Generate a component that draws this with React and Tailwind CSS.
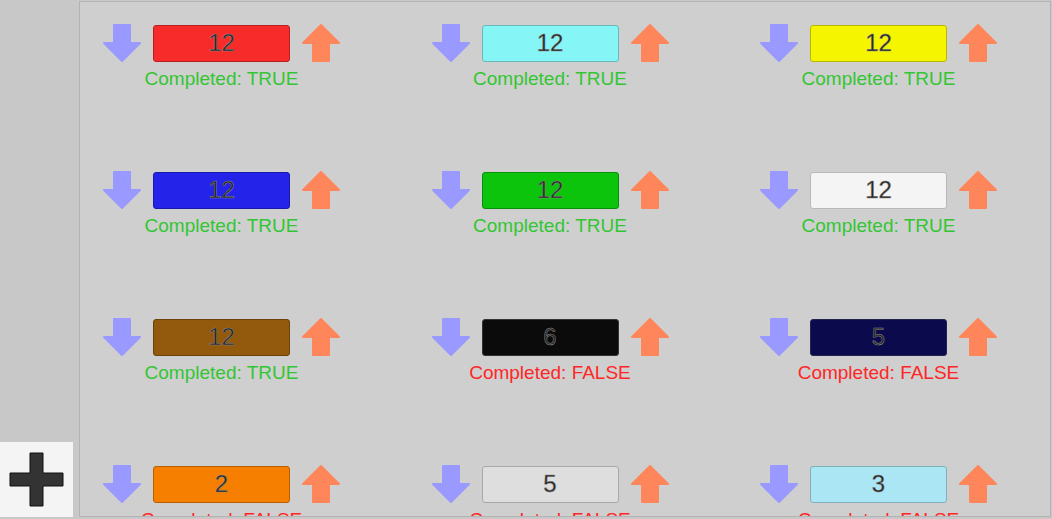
import React from "react";

const items = [
  { color: "#f82b2b", border: "#b82020", value: 12, done: true },
  { color: "#86f5f5", border: "#6ab8b8", value: 12, done: true },
  { color: "#f5f500", border: "#b8b800", value: 12, done: true },
  { color: "#2323ea", border: "#1a1aa8", value: 12, done: true },
  { color: "#0bc40b", border: "#0a8f0a", value: 12, done: true },
  { color: "#f4f4f4", border: "#b8b8b8", value: 12, done: true },
  { color: "#93590c", border: "#6b420a", value: 12, done: true },
  { color: "#0b0b0c", border: "#333", value: 6, done: false },
  { color: "#0a0a4c", border: "#23234f", value: 5, done: false },
  { color: "#f67f00", border: "#b86000", value: 2, done: false },
  { color: "#dedede", border: "#a8a8a8", value: 5, done: false },
  { color: "#aae6f4", border: "#7fb0bc", value: 3, done: false },
];

function DownArrow() {
  return (
    <svg width="40" height="40" viewBox="0 0 40 40" className="shrink-0">
      <path
        d="M12 2 H28 V20 H38 L20 38 L2 20 H12 Z"
        fill="#9999ff"
        stroke="#9999ff"
        strokeWidth="2"
        strokeLinejoin="round"
      />
    </svg>
  );
}

function UpArrow() {
  return (
    <svg width="40" height="40" viewBox="0 0 40 40" className="shrink-0">
      <path
        d="M20 2 L38 20 H28 V38 H12 V20 H2 Z"
        fill="#ff865a"
        stroke="#ff865a"
        strokeWidth="2"
        strokeLinejoin="round"
      />
    </svg>
  );
}

function Counter({ item }) {
  return (
    <div className="flex flex-col items-center h-[147px] w-fit">
      <div className="flex items-center gap-[11px]">
        <DownArrow />
        <div
          className="w-[137px] h-[37px] rounded-[3px] border flex items-center justify-center text-[24px] text-[#222] [-webkit-text-stroke:0.5px_#8a8a8a]"
          style={{ backgroundColor: item.color, borderColor: item.border }}
        >
          {item.value}
        </div>
        <UpArrow />
      </div>
      <p
        className={`text-[19px] leading-[24px] mt-[4px] ${
          item.done ? "text-[#33c633]" : "text-[#ff2626]"
        }`}
      >
        Completed: {item.done ? "TRUE" : "FALSE"}
      </p>
    </div>
  );
}

export default function App() {
  return (
    <div className="flex h-[519px] w-[1052px] bg-[#c8c8c8] font-['Liberation_Sans',Arial,sans-serif]">
      {/* side bar with add button */}
      <div className="w-[79px] shrink-0 flex flex-col justify-end pb-[2px]">
        <button className="w-[73px] h-[75px] bg-[#f4f4f4] flex items-center justify-center">
          <svg width="55" height="55" viewBox="0 0 55 55">
            <path
              d="M21 1 H34 V21 H54 V34 H34 V54 H21 V34 H1 V21 H21 Z"
              fill="#333"
              stroke="#111"
              strokeWidth="1"
              strokeLinejoin="round"
            />
          </svg>
        </button>
      </div>

      {/* list of counters */}
      <div className="flex-1 mt-[1px] mb-[2px] mr-[1px] border border-[#b3b3b3] bg-[#cfcfcf] overflow-hidden">
        <div className="grid grid-cols-[repeat(3,328.5px)] justify-items-start pl-[22px] pt-[21px]">
          {items.map((item, i) => (
            <Counter key={i} item={item} />
          ))}
        </div>
      </div>
    </div>
  );
}
